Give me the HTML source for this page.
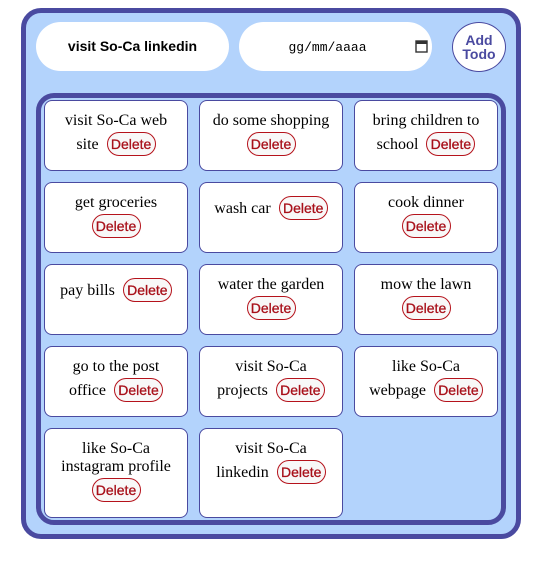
<!DOCTYPE html>
<html><head><style>
body{margin:0;width:536px;height:574px;background:#fff;font-family:"Liberation Serif",serif;position:relative}
.outer{position:absolute;left:21px;top:8px;width:490px;height:521px;border:5px solid #4a4aa0;border-radius:20px;background:#b3d3fc}
.inp{position:absolute;top:9px;height:49px;width:193px;background:#fff;border-radius:25px;font-family:"Liberation Sans",sans-serif;font-size:14px;text-align:center;line-height:49px}
.add{position:absolute;left:426px;top:9px;width:52px;height:48px;border:1px solid #4a4aa0;border-radius:50%;background:#fff;color:#4a4aa0;font:bold 14px/14px "Liberation Sans",sans-serif;text-align:center;display:flex;align-items:center;justify-content:center}
.card{position:absolute;width:142px;height:68px;border:1px solid #4a4aa0;border-radius:8px;background:#fff;font-size:16px;text-align:center;color:#000;box-sizing:content-box}
.l{height:24px;line-height:24px;white-space:nowrap}
.s{height:18px;line-height:18px}
.d{display:inline-block;width:47px;height:22px;line-height:22px;border:1px solid #b5121b;border-radius:12px;color:#a8101a;background:#f8f8f8;font:14px/22px "Liberation Sans",sans-serif;-webkit-text-stroke:0.3px #a8101a;vertical-align:middle;margin-left:4px;position:relative;top:-1px}
.l .d:first-child{margin-left:0}
</style></head><body>
<div class="outer">
<div class="inp" style="left:10px;font-weight:bold">visit So-Ca linkedin</div>
<div class="inp" style="left:213px;font-family:'Liberation Mono',monospace;font-size:13px;line-height:52px;box-sizing:border-box;padding-right:16px">gg/mm/aaaa
<svg style="position:absolute;right:4px;top:17px" width="13" height="14" viewBox="0 0 13 14"><rect x="1" y="2" width="11" height="11" fill="none" stroke="#333" stroke-width="1.4"/><rect x="1" y="2" width="11" height="3" fill="#333"/></svg></div>
<div class="add">Add<br>Todo</div>
</div>
<div style="position:absolute;left:36px;top:93px;width:470px;height:432px;border:5px solid #4a4aa0;border-radius:18px;box-sizing:border-box"></div>

<div class="card" style="left:44px;top:100px;padding-top:8px;height:61px"><div class="l">visit So-Ca web</div><div class="l">site &nbsp;<span class="d">Delete</span></div></div>
<div class="card" style="left:199px;top:100px;padding-top:8px;height:61px"><div class="l">do some shopping</div><div class="l"><span class="d">Delete</span></div></div>
<div class="card" style="left:354px;top:100px;padding-top:8px;height:61px"><div class="l">bring children to</div><div class="l">school &nbsp;<span class="d">Delete</span></div></div>

<div class="card" style="left:44px;top:182px;padding-top:8px;height:61px"><div class="l">get groceries</div><div class="l"><span class="d">Delete</span></div></div>
<div class="card" style="left:199px;top:182px;padding-top:14px;height:55px"><div class="l">wash car &nbsp;<span class="d">Delete</span></div></div>
<div class="card" style="left:354px;top:182px;padding-top:8px;height:61px"><div class="l">cook dinner</div><div class="l"><span class="d">Delete</span></div></div>

<div class="card" style="left:44px;top:264px;padding-top:14px;height:55px"><div class="l">pay bills &nbsp;<span class="d">Delete</span></div></div>
<div class="card" style="left:199px;top:264px;padding-top:8px;height:61px"><div class="l">water the garden</div><div class="l"><span class="d">Delete</span></div></div>
<div class="card" style="left:354px;top:264px;padding-top:8px;height:61px"><div class="l">mow the lawn</div><div class="l"><span class="d">Delete</span></div></div>

<div class="card" style="left:44px;top:346px;padding-top:8px;height:61px"><div class="l">go to the post</div><div class="l">office &nbsp;<span class="d">Delete</span></div></div>
<div class="card" style="left:199px;top:346px;padding-top:8px;height:61px"><div class="l">visit So-Ca</div><div class="l">projects &nbsp;<span class="d">Delete</span></div></div>
<div class="card" style="left:354px;top:346px;padding-top:8px;height:61px"><div class="l">like So-Ca</div><div class="l">webpage &nbsp;<span class="d">Delete</span></div></div>

<div class="card" style="left:44px;top:428px;padding-top:11px;height:77px"><div class="l s">like So-Ca</div><div class="l s">instagram profile</div><div class="l" style="margin-top:3px"><span class="d">Delete</span></div></div>
<div class="card" style="left:199px;top:428px;padding-top:8px;height:80px"><div class="l">visit So-Ca</div><div class="l">linkedin &nbsp;<span class="d">Delete</span></div></div>
</body></html>
